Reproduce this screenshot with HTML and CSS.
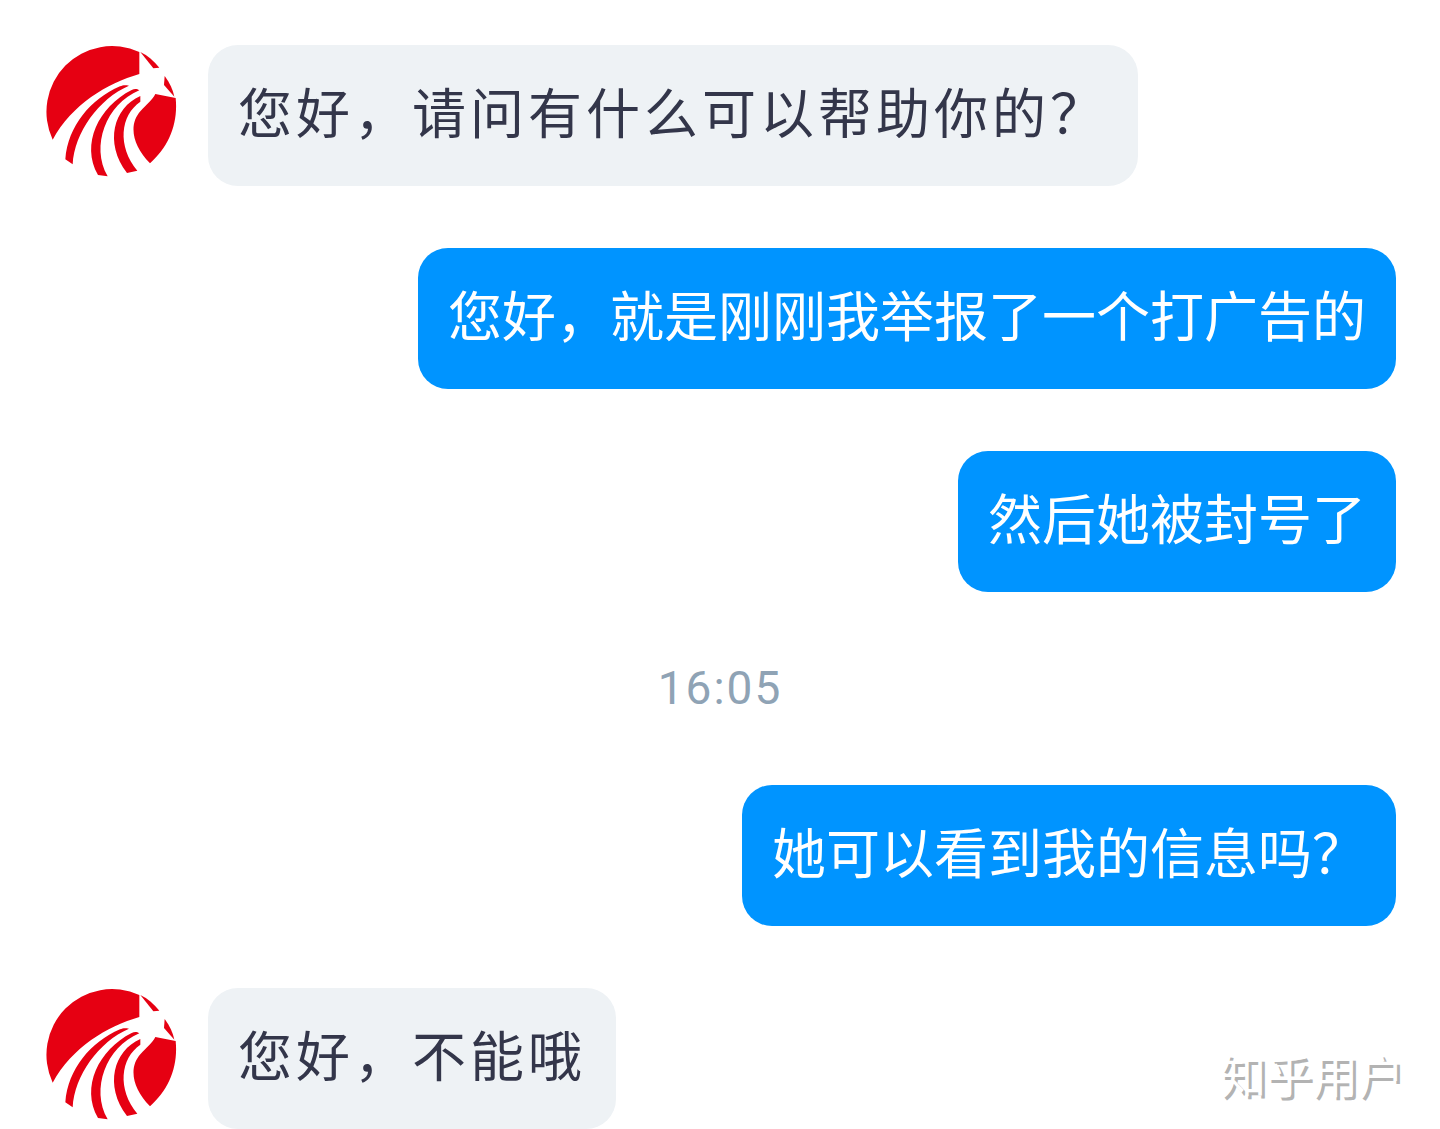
FILE: index.html
```html
<!DOCTYPE html>
<html lang="zh-CN">
<head>
    <meta charset="UTF-8">
    <meta name="viewport" content="width=device-width, initial-scale=1.0">
    <title>在线客服</title>
    <link rel="stylesheet" href="styles.css">
</head>
<body>
    <!-- логотип для аватара -->
    <svg class="symbols" aria-hidden="true">
        <symbol id="logo" viewBox="29 27 396 396">
            <path d="M52 311A197 197 0 0 1 312 48V114C215 142 110 205 52 311Z"/>
            <path d="M281 149C268 146 262 148 254 151C165 190 98 270 90 370L112 385C117 290 190 188 281 149Z"/>
            <path d="M312 163C304 157 297 158 289 162C190 212 135 325 188 417L217 421C165 330 212 205 312 163Z"/>
            <path d="M315 180C235 215 206 320 275 411L306 404C245 330 255 238 315 197Z"/>
            <path d="M360 174L421 186C429 265 399 334 344 382C293 330 278 268 315 226C334 205 351 192 360 174Z"/>
            <path d="M315 48C338 59 356 76 372 95L354 97Z"/>
            <path d="M388 120C403 140 413 161 417 182L386 147Z"/>
        </symbol>
    </svg>

    <main class="chat">
        <div class="message consultant">
            <svg class="avatar" role="img" aria-label="客服"><use href="#logo"/></svg>
            <p class="bubble">您好，请问有什么可以帮助你的？</p>
        </div>

        <div class="message client">
            <p class="bubble">您好，就是刚刚我举报了一个打广告的</p>
        </div>

        <div class="message client">
            <p class="bubble">然后她被封号了</p>
        </div>

        <time class="time" datetime="16:05">16:05</time>

        <div class="message client">
            <p class="bubble">她可以看到我的信息吗？</p>
        </div>

        <div class="message consultant">
            <svg class="avatar" role="img" aria-label="客服"><use href="#logo"/></svg>
            <p class="bubble">您好，不能哦</p>
        </div>

        <span class="watermark">知乎用户</span>
    </main>
</body>
</html>
```
FILE: styles.css
```css
* {
    box-sizing: border-box;
}
body {
    margin: 0;
    background-color: #fff;
    font-family: Roboto, "Noto Sans CJK SC", sans-serif;
    color: #33364a;
}
.symbols {
    display: none;
}
.chat {
    position: relative;
    display: flex;
    flex-direction: column;
    gap: 62px;
    padding: 45px 44px 0;
}
.message {
    display: flex;
    align-items: flex-start;
    gap: 31px;
}
.client {
    justify-content: flex-end;
}
.avatar {
    flex: none;
    width: 132px;
    height: 132px;
    margin-left: 1px;
    fill: #e60012;
}
.bubble {
    margin: 0;
    padding: 26px 30px 35px;
    border-radius: 30px;
    font-family: "Noto Sans CJK SC", sans-serif;
    font-size: 54px;
    line-height: 80px;
}
.consultant .bubble {
    background-color: #eef2f5;
    letter-spacing: 4px;
}
.client .bubble {
    background-color: #0094ff;
    color: #fff;
}
.time {
    color: #8fa3b5;
    font-size: 46px;
    line-height: 69px;
    letter-spacing: 2px;
    text-align: center;
}
.watermark {
    position: absolute;
    right: 36px;
    bottom: 22px;
    color: #fff;
    font-family: "Noto Sans CJK SC", sans-serif;
    font-size: 46px;
    line-height: 68px;
    text-shadow: 3px 3px 0 #b3b3b3;
}
```
